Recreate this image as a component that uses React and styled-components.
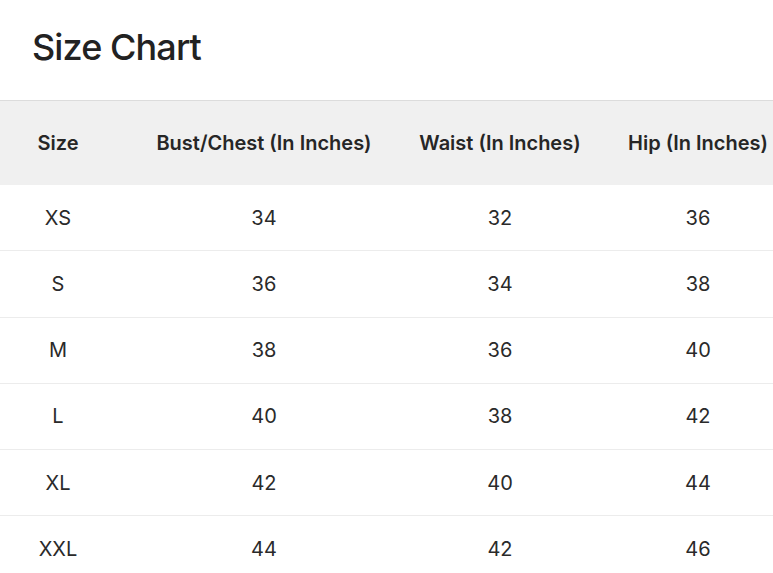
import React from 'react';
import styled, { createGlobalStyle } from 'styled-components';

const GlobalStyle = createGlobalStyle`
  html, body {
    margin: 0;
    padding: 0;
    background: #fff;
    font-family: Inter, "Noto Sans", sans-serif;
    color: #222;
  }
`;

const Page = styled.div`
  width: 100%;
  overflow: hidden;
`;

const Title = styled.h1`
  margin: 25px 0 31px 32px;
  font-size: 36px;
  line-height: 44px;
  font-weight: 500;
  letter-spacing: -0.025em;
  color: #222;
`;

const Table = styled.table`
  border-collapse: collapse;
  table-layout: fixed;
  width: 808px;
`;

const HeadRow = styled.tr`
  background: #f0f0f0;
  border-top: 1px solid #dcdcdc;
`;

const HeadCell = styled.th`
  height: 84px;
  padding: 0;
  font-size: 20px;
  font-weight: 600;
  color: #262626;
  text-align: center;
  white-space: nowrap;
`;

const Row = styled.tr`
  border-bottom: 1px solid #ececec;
`;

const Cell = styled.td`
  height: 65.25px;
  padding: 0;
  font-size: 20px;
  font-weight: 400;
  color: #2a2a2a;
  text-align: center;
`;

const columns = [
  { label: 'Size', width: 116 },
  { label: 'Bust/Chest (In Inches)', width: 296 },
  { label: 'Waist (In Inches)', width: 176 },
  { label: 'Hip (In Inches)', width: 220 },
];

const sizes = [
  ['XS', 34, 32, 36],
  ['S', 36, 34, 38],
  ['M', 38, 36, 40],
  ['L', 40, 38, 42],
  ['XL', 42, 40, 44],
  ['XXL', 44, 42, 46],
];

const App = () => {
  return (
    <>
      <GlobalStyle />
      <Page>
        <Title>Size Chart</Title>
        <Table>
          <colgroup>
            {columns.map(col => (
              <col key={col.label} style={{ width: col.width }} />
            ))}
          </colgroup>
          <thead>
            <HeadRow>
              {columns.map(col => (
                <HeadCell key={col.label}>{col.label}</HeadCell>
              ))}
            </HeadRow>
          </thead>
          <tbody>
            {sizes.map(row => (
              <Row key={row[0]}>
                {row.map((value, i) => (
                  <Cell key={i}>{value}</Cell>
                ))}
              </Row>
            ))}
          </tbody>
        </Table>
      </Page>
    </>
  );
};

export default App;
